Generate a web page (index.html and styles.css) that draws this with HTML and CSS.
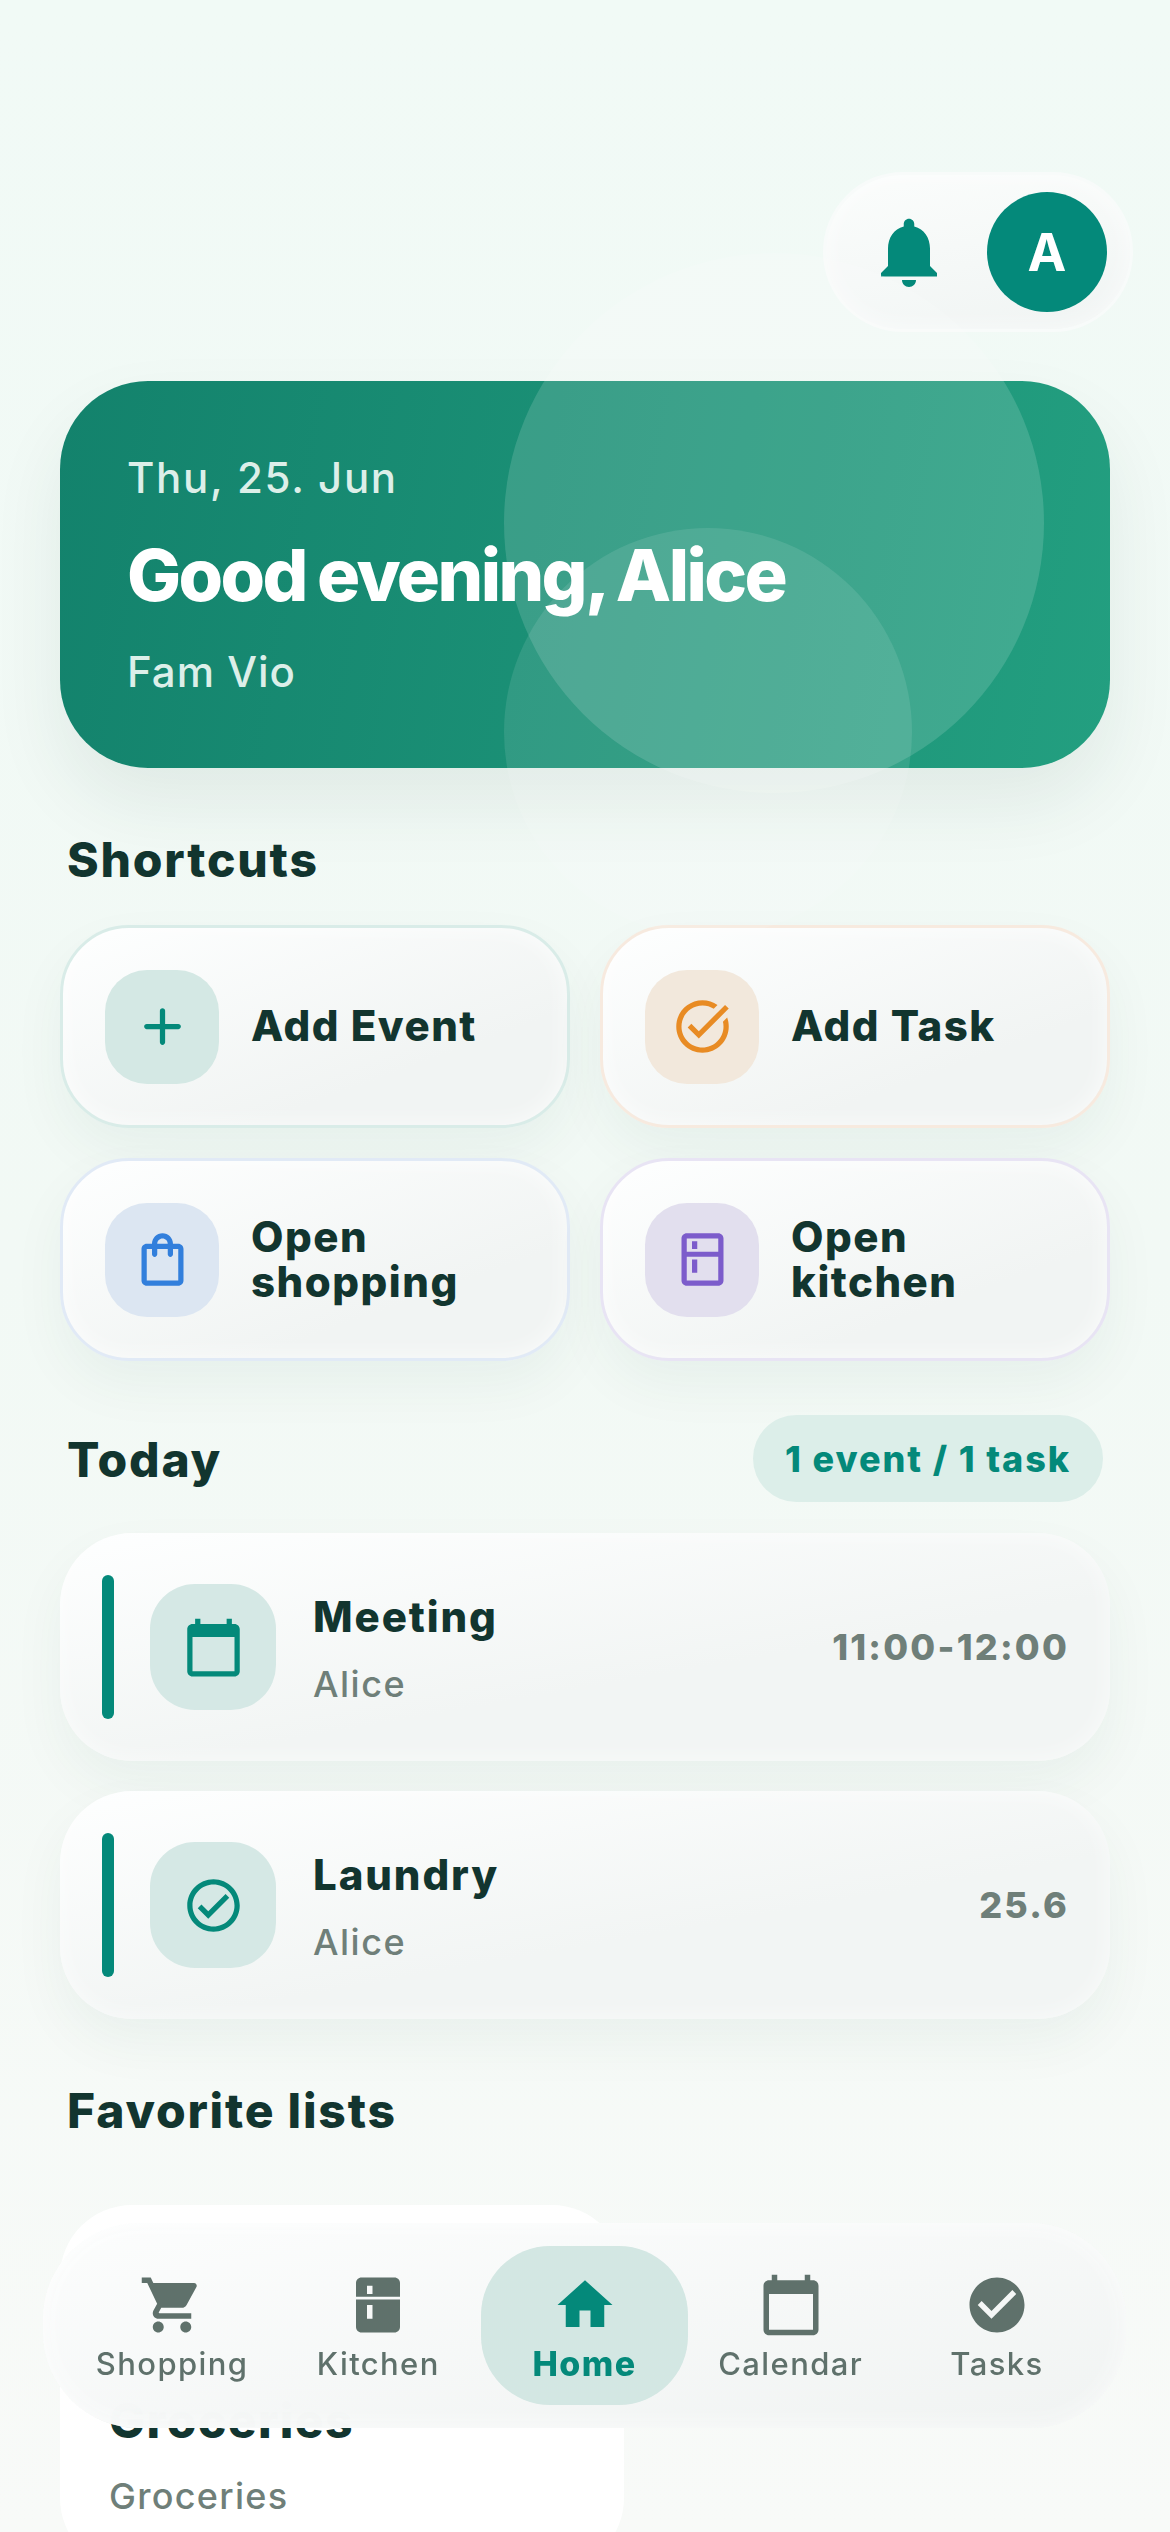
FILE: index.html
```html
<!DOCTYPE html>
<html lang="en">

<head>
    <meta charset="UTF-8">
    <meta name="viewport" content="width=device-width, initial-scale=1.0">
    <title>Fam Vio</title>
    <link rel="stylesheet" href="styles.css">
</head>

<body>
    <main class="page">
        <header class="top-bar">
            <div class="top-pill">
                <svg class="bell" viewBox="0 0 24 24"><path d="M12 22c1.1 0 2-.9 2-2h-4c0 1.1.9 2 2 2zm6-6v-5c0-3.07-1.63-5.64-4.5-6.32V4c0-.83-.67-1.5-1.5-1.5s-1.5.67-1.5 1.5v.68C7.64 5.36 6 7.92 6 11v5l-2 2v1h16v-1l-2-2z"/></svg>
                <div class="avatar">A</div>
            </div>
        </header>

        <section class="hero">
            <div class="hero-circle big"></div>
            <div class="hero-circle small"></div>
            <div class="hero-date">Thu, 25. Jun</div>
            <h1 class="hero-title">Good evening, Alice</h1>
            <div class="hero-family">Fam Vio</div>
        </section>

        <h2 class="section-title shortcuts-title">Shortcuts</h2>
        <div class="shortcuts">
            <div class="shortcut teal">
                <div class="shortcut-icon"><svg viewBox="0 0 24 24"><path d="M18 13h-5v5c0 .55-.45 1-1 1s-1-.45-1-1v-5H6c-.55 0-1-.45-1-1s.45-1 1-1h5V6c0-.55.45-1 1-1s1 .45 1 1v5h5c.55 0 1 .45 1 1s-.45 1-1 1z"/></svg></div>
                <span>Add Event</span>
            </div>
            <div class="shortcut orange">
                <div class="shortcut-icon"><svg viewBox="0 0 24 24"><path d="M22 5.18L10.59 16.6l-4.24-4.24 1.41-1.41 2.83 2.83 10-10L22 5.18zm-2.21 5.04c.13.57.21 1.17.21 1.78 0 4.42-3.58 8-8 8s-8-3.58-8-8 3.58-8 8-8c1.58 0 3.04.46 4.28 1.25l1.44-1.44C16.1 2.67 14.13 2 12 2 6.48 2 2 6.48 2 12s4.48 10 10 10 10-4.48 10-10c0-1.19-.22-2.33-.6-3.39l-1.61 1.61z"/></svg></div>
                <span>Add Task</span>
            </div>
            <div class="shortcut blue">
                <div class="shortcut-icon"><svg viewBox="0 0 24 24"><path d="M18 6h-2c0-2.21-1.79-4-4-4S8 3.79 8 6H6c-1.1 0-2 .9-2 2v12c0 1.1.9 2 2 2h12c1.1 0 2-.9 2-2V8c0-1.1-.9-2-2-2zm-6-2c1.1 0 2 .9 2 2h-4c0-1.1.9-2 2-2zm6 16H6V8h2v2c0 .55.45 1 1 1s1-.45 1-1V8h4v2c0 .55.45 1 1 1s1-.45 1-1V8h2v12z"/></svg></div>
                <span>Open shopping</span>
            </div>
            <div class="shortcut purple">
                <div class="shortcut-icon"><svg viewBox="0 0 24 24"><path d="M18 2.01L6 2c-1.1 0-2 .89-2 2v16c0 1.1.9 2 2 2h12c1.1 0 2-.9 2-2V4c0-1.11-.9-1.99-2-1.99zM18 20H6v-9.02h12V20zm0-11H6V4h12v5zM8 5h2v3H8zm0 7h2v5H8z"/></svg></div>
                <span>Open kitchen</span>
            </div>
        </div>

        <div class="today-head">
            <h2 class="section-title">Today</h2>
            <div class="today-count">1 event / 1 task</div>
        </div>

        <div class="agenda">
            <div class="agenda-item">
                <div class="agenda-bar"></div>
                <div class="agenda-icon"><svg viewBox="0 0 24 24"><path d="M20 3h-1V1h-2v2H7V1H5v2H4c-1.1 0-2 .9-2 2v16c0 1.1.9 2 2 2h16c1.1 0 2-.9 2-2V5c0-1.1-.9-2-2-2zm0 18H4V8h16v13z"/></svg></div>
                <div class="agenda-text">
                    <div class="agenda-name">Meeting</div>
                    <div class="agenda-who">Alice</div>
                </div>
                <div class="agenda-time">11:00-12:00</div>
            </div>
            <div class="agenda-item">
                <div class="agenda-bar"></div>
                <div class="agenda-icon"><svg viewBox="0 0 24 24"><path d="M12 2C6.48 2 2 6.48 2 12s4.48 10 10 10 10-4.48 10-10S17.52 2 12 2zm0 18c-4.41 0-8-3.59-8-8s3.59-8 8-8 8 3.59 8 8-3.59 8-8 8zm4.59-12.42L10 14.17l-2.59-2.58L6 13l4 4 8-8z"/></svg></div>
                <div class="agenda-text">
                    <div class="agenda-name">Laundry</div>
                    <div class="agenda-who">Alice</div>
                </div>
                <div class="agenda-time">25.6</div>
            </div>
        </div>

        <h2 class="section-title favorites-title">Favorite lists</h2>
        <div class="list-card">
            <div class="list-name">Groceries</div>
            <div class="list-type">Groceries</div>
        </div>
    </main>

    <nav class="bottom-nav">
        <div class="nav-item">
            <svg viewBox="0 0 24 24"><path d="M7 18c-1.1 0-1.99.9-1.99 2S5.9 22 7 22s2-.9 2-2-.9-2-2-2zM1 2v2h2l3.6 7.59-1.35 2.45c-.16.28-.25.61-.25.96 0 1.1.9 2 2 2h12v-2H7.42c-.14 0-.25-.11-.25-.25l.03-.12.9-1.63h7.45c.75 0 1.41-.41 1.75-1.03l3.58-6.49c.08-.14.12-.31.12-.48 0-.55-.45-1-1-1H5.21l-.94-2H1zm16 16c-1.1 0-1.99.9-1.99 2s.89 2 1.99 2 2-.9 2-2-.9-2-2-2z"/></svg>
            <span>Shopping</span>
        </div>
        <div class="nav-item">
            <svg viewBox="0 0 24 24"><path fill-rule="evenodd" d="M18 2.01L6 2c-1.1 0-2 .89-2 2v5h16V4c0-1.11-.9-1.99-2-1.99zM10 8H8V5h2v3zM4 10v10c0 1.1.9 2 2 2h12c1.1 0 2-.9 2-2V10H4zm6 7H8v-5h2v5z"/></svg>
            <span>Kitchen</span>
        </div>
        <div class="nav-item active">
            <svg viewBox="0 0 24 24"><path d="M10 20v-6h4v6h5v-8h3L12 3 2 12h3v8z"/></svg>
            <span>Home</span>
        </div>
        <div class="nav-item">
            <svg viewBox="0 0 24 24"><path d="M20 3h-1V1h-2v2H7V1H5v2H4c-1.1 0-2 .9-2 2v16c0 1.1.9 2 2 2h16c1.1 0 2-.9 2-2V5c0-1.1-.9-2-2-2zm0 18H4V8h16v13z"/></svg>
            <span>Calendar</span>
        </div>
        <div class="nav-item">
            <svg viewBox="0 0 24 24"><path d="M12 2C6.48 2 2 6.48 2 12s4.48 10 10 10 10-4.48 10-10S17.52 2 12 2zm-2 15l-5-5 1.41-1.41L10 14.17l7.59-7.59L19 8l-9 9z"/></svg>
            <span>Tasks</span>
        </div>
    </nav>
</body>

</html>
```

FILE: styles.css
```css
html,
body {
    margin: 0;
    height: 2532px;
    overflow: hidden;
}

body {
    position: relative;
    font-family: Inter, "Noto Sans", sans-serif;
    color: #12352f;
    background: linear-gradient(180deg, #f1faf6 0%, #f2f9f5 50%, #f8faf8 100%);
}

.page {
    height: 2532px;
    box-sizing: border-box;
    overflow: hidden;
    padding: 172px 60px 0;
}

/* header */
.top-bar {
    display: flex;
    justify-content: flex-end;
    margin-right: -23px;
}

.top-pill {
    width: 310px;
    height: 160px;
    box-sizing: border-box;
    border: 3px solid #f8fbfa;
    border-radius: 80px;
    padding-right: 23px;
    display: flex;
    align-items: center;
    justify-content: flex-end;
    background: linear-gradient(170deg, #fbfdfc, #f0f4f3);
    box-shadow: inset 0 0 24px rgba(255, 255, 255, 0.6);
}

.bell {
    width: 84px;
    height: 84px;
    fill: #04897a;
    margin-right: 36px;
}

.avatar {
    width: 120px;
    height: 120px;
    border-radius: 50%;
    background-color: #04897a;
    color: white;
    font-size: 52px;
    font-weight: 700;
    display: flex;
    align-items: center;
    justify-content: center;
}

/* hero */
.hero {
    position: relative;
    height: 387px;
    box-sizing: border-box;
    margin-top: 49px;
    padding: 70px 67px 0;
    border-radius: 88px;
    background: linear-gradient(100deg, #13826c, #239f80);
    box-shadow: 0 36px 72px rgba(20, 70, 55, 0.08);
}

.hero-circle {
    position: absolute;
    border-radius: 50%;
    pointer-events: none;
}

.hero-circle.big {
    width: 540px;
    height: 540px;
    top: -128px;
    right: 66px;
    background-color: rgba(255, 255, 255, 0.14);
}

.hero-circle.small {
    width: 408px;
    height: 408px;
    top: 147px;
    left: 444px;
    background-color: rgba(255, 255, 255, 0.1);
}

.hero-date,
.hero-family {
    position: relative;
    font-size: 42px;
    line-height: 54px;
    font-weight: 500;
    letter-spacing: 1.7px;
    color: #dcefe9;
}

.hero-family {
    letter-spacing: 1px;
}

.hero-title {
    position: relative;
    margin: 27px 0 27px;
    font-size: 72px;
    line-height: 86px;
    font-weight: 800;
    letter-spacing: -2.6px;
    word-spacing: -2px;
    color: white;
}

/* sections */
.section-title {
    margin: 0;
    font-size: 48px;
    line-height: 58px;
    font-weight: 800;
    letter-spacing: 1.8px;
}

.shortcuts-title {
    margin: 63px 7px 36px;
}

.shortcuts {
    display: grid;
    grid-template-columns: 1fr 1fr;
    gap: 30px;
}

.shortcut {
    height: 203px;
    box-sizing: border-box;
    border: 3px solid;
    border-radius: 69px;
    padding-left: 42px;
    display: flex;
    align-items: center;
    gap: 32px;
    font-size: 42px;
    line-height: 45px;
    font-weight: 800;
    letter-spacing: 1.5px;
    background: linear-gradient(160deg, #feffff, #f1f4f3 70%);
    box-shadow: 0 24px 54px rgba(20, 70, 55, 0.05), inset 0 0 24px rgba(255, 255, 255, 0.7);
}

.shortcut span {
    width: 240px;
    padding-bottom: 2px;
}

.shortcut-icon {
    flex: none;
    width: 114px;
    height: 114px;
    border-radius: 42px;
    display: flex;
    align-items: center;
    justify-content: center;
}

.shortcut-icon svg {
    width: 63px;
    height: 63px;
}

.shortcut.teal { border-color: #d9ece8; }
.shortcut.teal .shortcut-icon { background-color: #d4e8e4; }
.shortcut.teal svg { fill: #04897a; }

.shortcut.orange { border-color: #f7eadf; }
.shortcut.orange .shortcut-icon { background-color: #f2e8dc; }
.shortcut.orange svg { fill: #e88b24; }

.shortcut.blue { border-color: #e1eaf6; }
.shortcut.blue .shortcut-icon { background-color: #dce6f2; }
.shortcut.blue svg { fill: #327fdc; }

.shortcut.purple { border-color: #e8e4f4; }
.shortcut.purple .shortcut-icon { background-color: #e2dfee; }
.shortcut.purple svg { fill: #7c5ccb; }

.today-head {
    display: flex;
    align-items: center;
    justify-content: space-between;
    margin: 54px 7px 31px 7px;
}

.today-head .section-title {
    padding-top: 3px;
}

.today-count {
    width: 350px;
    height: 87px;
    border-radius: 44px;
    background-color: #dceee9;
    color: #04897a;
    font-size: 36px;
    font-weight: 800;
    letter-spacing: 1.9px;
    display: flex;
    align-items: center;
    justify-content: center;
}

/* agenda */
.agenda {
    display: flex;
    flex-direction: column;
    gap: 30px;
}

.agenda-item {
    height: 228px;
    box-sizing: border-box;
    border-radius: 72px;
    padding: 0 41px 0 42px;
    display: flex;
    align-items: center;
    background: linear-gradient(170deg, #feffff, #f2f5f4 60%);
    box-shadow: 0 24px 54px rgba(20, 70, 55, 0.05), inset 0 0 24px rgba(255, 255, 255, 0.6);
}

.agenda-bar {
    flex: none;
    width: 12px;
    height: 144px;
    border-radius: 6px;
    background-color: #04897a;
}

.agenda-icon {
    flex: none;
    width: 126px;
    height: 126px;
    margin: 0 37px 0 36px;
    border-radius: 45px;
    background-color: #d5e8e5;
    display: flex;
    align-items: center;
    justify-content: center;
}

.agenda-icon svg {
    width: 63px;
    height: 63px;
    fill: #04897a;
}

.agenda-text {
    flex: 1;
    padding-top: 3px;
}

.agenda-name {
    font-size: 42px;
    line-height: 52px;
    font-weight: 800;
    letter-spacing: 1.9px;
}

.agenda-who {
    margin-top: 19px;
    font-size: 36px;
    line-height: 44px;
    font-weight: 500;
    letter-spacing: 1.5px;
    color: #6f7f79;
}

.agenda-time {
    font-size: 36px;
    font-weight: 800;
    letter-spacing: 2.2px;
    color: #6f7f79;
}

.favorites-title {
    margin: 63px 7px 65px;
}

.list-card {
    width: 564px;
    height: 365px;
    box-sizing: border-box;
    border-radius: 72px;
    padding: 183px 49px 0;
    background-color: white;
}

.list-name {
    font-size: 48px;
    line-height: 66px;
    font-weight: 800;
    letter-spacing: 1.4px;
}

.list-type {
    margin-top: 20px;
    font-size: 36px;
    line-height: 44px;
    font-weight: 500;
    letter-spacing: 1.3px;
    color: #6f7f79;
}

/* bottom nav, floats over the page */
.bottom-nav {
    position: absolute;
    left: 43px;
    top: 2223px;
    width: 1083px;
    height: 205px;
    box-sizing: border-box;
    padding: 0 26px;
    border-radius: 96px;
    display: flex;
    align-items: center;
    background: linear-gradient(170deg, rgba(252, 253, 253, 0.98), rgba(240, 243, 242, 0.98));
    backdrop-filter: blur(24px);
    box-shadow: inset 0 0 24px rgba(255, 255, 255, 0.6);
}

.nav-item {
    flex: 1;
    height: 159px;
    box-sizing: border-box;
    padding-top: 26px;
    border-radius: 69px;
    display: flex;
    flex-direction: column;
    align-items: center;
    font-size: 31px;
    line-height: 40px;
    font-weight: 500;
    letter-spacing: 1.4px;
    color: #5f716b;
}

.nav-item svg {
    width: 66px;
    height: 66px;
    margin-bottom: 6px;
    fill: #5f716b;
}

.nav-item.active {
    background-color: #d3e7e3;
    color: #04897a;
    font-size: 34px;
    font-weight: 800;
}

.nav-item.active svg {
    fill: #04897a;
}
```
